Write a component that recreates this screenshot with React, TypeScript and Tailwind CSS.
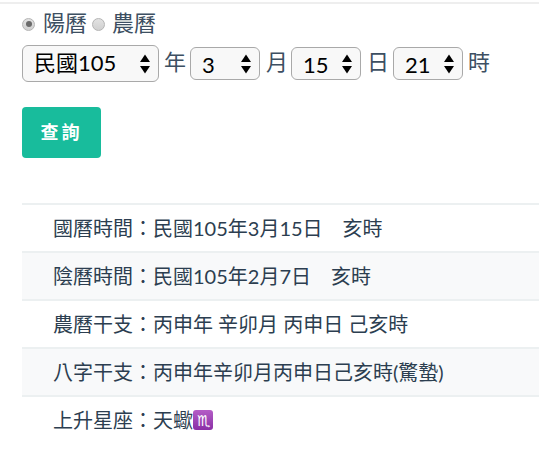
import React from "react";

const font = { fontFamily: '"Lato", "Noto Sans CJK TC", sans-serif' };

const rows = [
  { text: "國曆時間：民國105年3月15日　亥時", alt: false },
  { text: "陰曆時間：民國105年2月7日　亥時", alt: true },
  { text: "農曆干支：丙申年 辛卯月 丙申日 己亥時", alt: false },
  { text: "八字干支：丙申年辛卯月丙申日己亥時(驚蟄)", alt: true },
];

function Arrows() {
  return (
    <svg className="absolute right-[8px] top-1/2 -translate-y-1/2 pointer-events-none" width="12" height="20" viewBox="0 0 12 20">
      <path d="M6 0.5 L11 8 L1 8 Z" fill="#000" />
      <path d="M6 19.5 L11 12 L1 12 Z" fill="#000" />
    </svg>
  );
}

function Select({ value, wide }: { value: string; wide?: boolean }) {
  return (
    <div className={`relative shrink-0 ${wide ? "w-[137px] h-[37px]" : "w-[70px] h-[33px]"}`}>
      <select
        defaultValue={value}
        className="appearance-none w-full h-full rounded-[6px] border border-[#a9a9a9] bg-[#f8f8f8] text-black text-[22px] outline-none pl-[11px] pb-[2px]"
      >
        <option>{value}</option>
      </select>
      <Arrows />
    </div>
  );
}

function Radio({ checked }: { checked?: boolean }) {
  return (
    <span className="w-[13px] h-[13px] rounded-full border border-[#b4b4b4] bg-gradient-to-b from-[#e2e2e2] to-[#d0d0d0] flex items-center justify-center shrink-0 mt-[2px]">
      {checked && <span className="w-[6px] h-[6px] rounded-full bg-[#6a6a6a]" />}
    </span>
  );
}

export default function App() {
  return (
    <div className="w-[539px] h-[461px] bg-white overflow-hidden text-[#2c3e50]" style={font}>
      <div className="h-[2px] mt-[2px] bg-[#eeeeee]" />
      <div className="pl-[22px]">
        <div className="flex items-center h-[22px] mt-[8px] text-[22px] text-[#3d4f62]">
          <Radio checked />
          <span className="ml-[8px] -translate-y-[1px]">陽曆</span>
          <span className="ml-[5px] flex items-center">
            <Radio />
            <span className="ml-[7px] -translate-y-[1px]">農曆</span>
          </span>
        </div>
        <div className="flex items-center h-[37px] mt-[11px] text-[22px] text-[#3d4f62]">
          <Select value="民國105" wide />
          <span className="mx-[5px] w-[21px] -translate-y-[2px]">年</span>
          <Select value="3" />
          <span className="ml-[6px] mr-[5px] w-[20px] -translate-y-[2px]">月</span>
          <Select value="15" />
          <span className="ml-[6px] mr-[5px] w-[21px] -translate-y-[2px]">日</span>
          <Select value="21" />
          <span className="ml-[5px] -translate-y-[2px]">時</span>
        </div>
        <button className="mt-[25px] w-[79px] h-[51px] rounded-[4px] bg-[#18bc9c] text-white text-[18px] font-bold tracking-[3px]">
          查詢
        </button>
        <div className="mt-[45px]">
          {rows.map((r) => (
            <div
              key={r.text}
              className={`h-[48px] border-t-2 border-[#ecf0f1] pl-[31px] flex items-center text-[20px] ${r.alt ? "bg-[#f8f9fa]" : ""}`}
            >
              {r.text}
            </div>
          ))}
          <div className="h-[48px] border-t-2 border-[#ecf0f1] pl-[31px] flex items-center text-[20px]">
            上升星座：天蠍
            <span className="w-[20px] h-[20px] rounded-[3px] bg-gradient-to-b from-[#b45cc6] to-[#8a2fa6] text-white text-[15px] leading-[20px] text-center">
              ♏︎
            </span>
          </div>
        </div>
      </div>
    </div>
  );
}
